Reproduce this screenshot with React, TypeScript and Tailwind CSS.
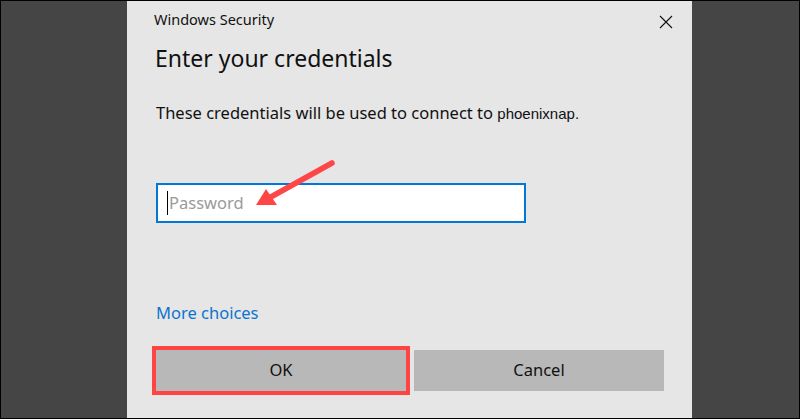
import React from 'react';

const segoe = { fontFamily: '"Noto Sans", "Open Sans", sans-serif' };

const CloseIcon = () => (
  <svg width="14" height="14" viewBox="0 0 14 14" className="block">
    <path d="M1 1 L13 13 M13 1 L1 13" stroke="#111" strokeWidth="1.1" fill="none" />
  </svg>
);

const Arrow = () => (
  <svg
    className="absolute left-0 top-0 pointer-events-none"
    width="800"
    height="419"
    viewBox="0 0 800 419"
  >
    <line x1="331" y1="162" x2="268" y2="197" stroke="#ff4646" strokeWidth="5.5" strokeLinecap="round" />
    <polygon points="255,204 265,188 276,204" fill="#ff4646" />
  </svg>
);

const App: React.FC = () => {
  return (
    <div
      className="relative w-[800px] h-[419px] border border-black bg-[#454545] flex pl-[126px] overflow-hidden"
      style={segoe}
    >
      {/* Dialog */}
      <div className="w-[565px] h-full bg-[#e6e6e6] flex flex-col pl-[29px] pr-[28px]">
        {/* Title bar */}
        <div className="flex items-start justify-between h-[30px] pt-[8px] -mr-[9px]">
          <span className="text-[14.5px] leading-[20px] text-[#111] -ml-[2px]">Windows Security</span>
          <div className="pt-[6px]">
            <CloseIcon />
          </div>
        </div>

        <h1 className="text-[23px] leading-[30px] text-[#111] mt-[12px] -ml-[1px]">Enter your credentials</h1>

        <p className="text-[16.5px] leading-[22px] text-[#111] mt-[29px]">
          These credentials will be used to connect to{' '}
          <span className="text-[15px]" style={{ fontFamily: '"Liberation Sans", Arial, sans-serif' }}>
            phoenixnap.
          </span>
        </p>

        {/* Password field */}
        <div className="mt-[58px] w-[370px] h-[40px] bg-white border-2 border-[#0078d7] flex items-center pl-[9px]">
          <span className="w-px h-[24px] bg-black" />
          <span className="text-[16.5px] text-[#9a9a9a] ml-[1px]">Password</span>
        </div>

        <a className="mt-[79px] text-[16.5px] leading-[22px] text-[#0c74cf] w-fit">More choices</a>

        {/* Buttons */}
        <div className="mt-[26px] flex gap-[8px]">
          <button className="flex-1 h-[41px] bg-[#b8b8b8] text-[16.5px] text-[#111] outline-4 outline-[#ff4444]">
            OK
          </button>
          <button className="flex-1 h-[41px] bg-[#b8b8b8] text-[16.5px] text-[#111]">Cancel</button>
        </div>
      </div>
      <Arrow />
    </div>
  );
};

export default App;
